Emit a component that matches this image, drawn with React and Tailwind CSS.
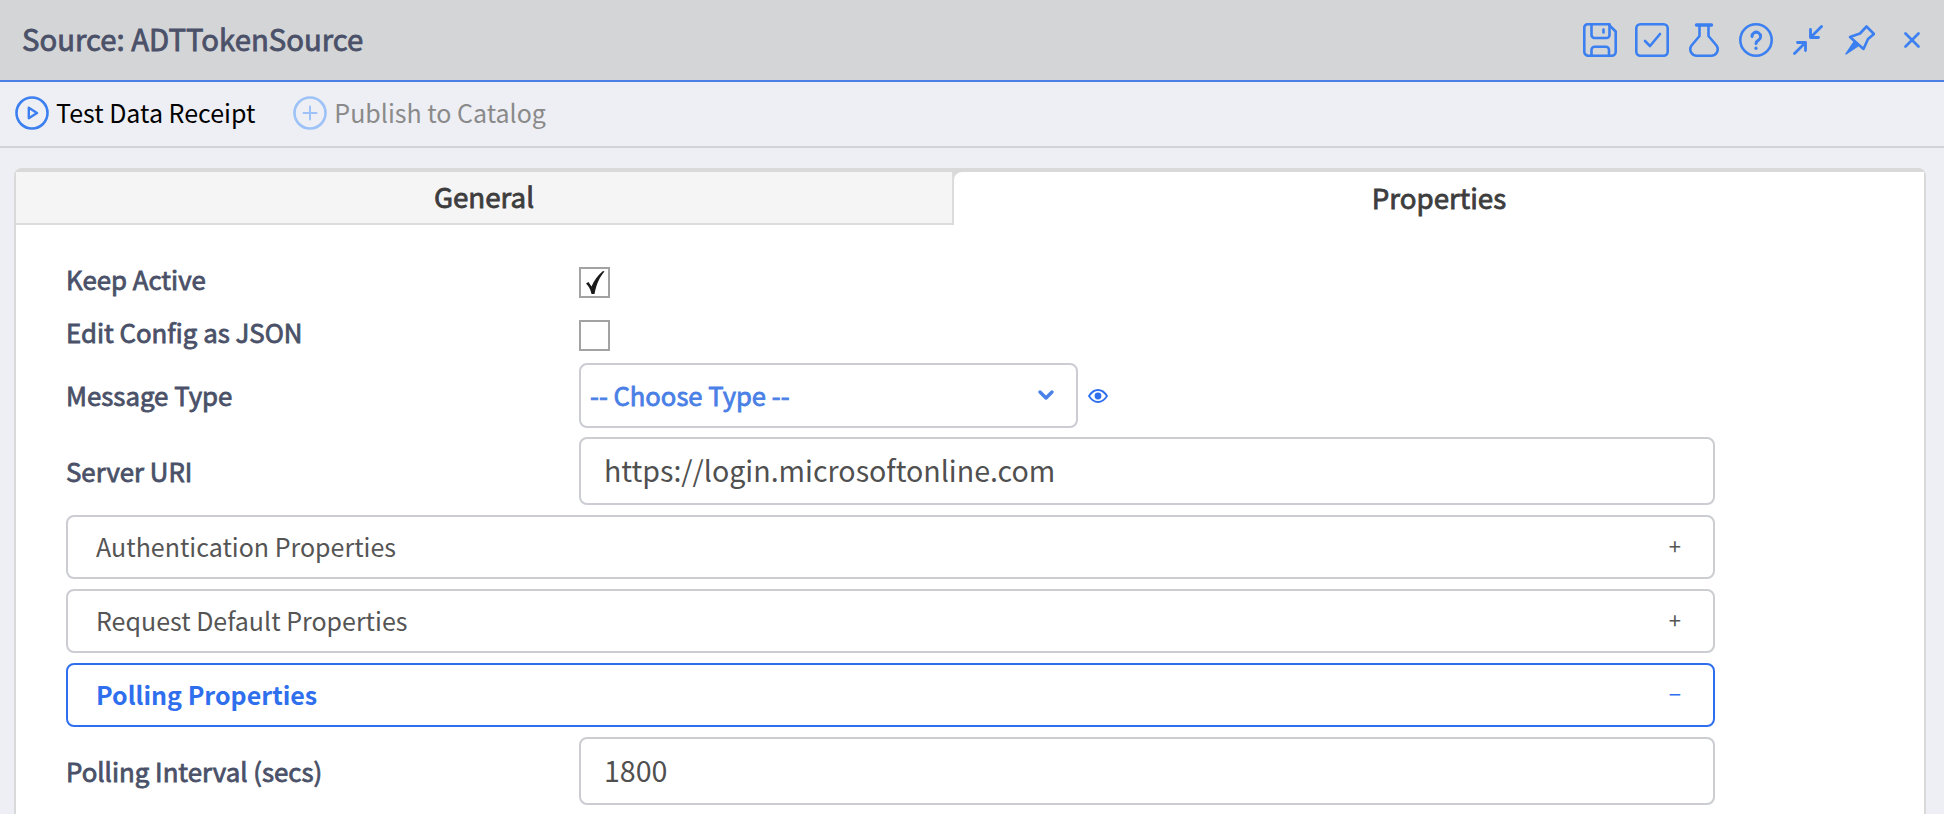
import React from "react";

const FONT = "font-['Noto_Sans_CJK_SC','Noto_Sans',sans-serif]";
const SEMI = "font-normal [-webkit-text-stroke:0.8px_currentColor]";

const SaveIcon = () => (
  <svg width="34" height="34" viewBox="0 0 34 34" fill="none" stroke="#3b7ff0" strokeWidth="2.6" strokeLinecap="round" strokeLinejoin="round">
    <path d="M4.500 1.300h21l7.200 7.200v20.200a4 4 0 0 1-4 4H5.300a4 4 0 0 1-4-4V4.500a3.200 3.200 0 0 1 3.200-3.200z" />
    <path d="M8.500 1.300v10.700a3 3 0 0 0 3 3h12a3 3 0 0 0 3-3V1.300" />
    <path d="M20.500 6.500v3" />
    <path d="M8.500 32.700v-6a3 3 0 0 1 3-3h11.500a3 3 0 0 1 3 3v6" />
  </svg>
);

const CheckIcon = () => (
  <svg width="34" height="34" viewBox="0 0 34 34" fill="none" stroke="#3b7ff0" strokeWidth="2.6" strokeLinecap="round" strokeLinejoin="round">
    <rect x="1.300" y="1.300" width="31.400" height="31.400" rx="4" />
    <path d="M10 18l5 5 10-12" />
  </svg>
);

const FlaskIcon = () => (
  <svg width="32" height="34" viewBox="0 0 32 34" fill="none" stroke="#3b7ff0" strokeWidth="2.6" strokeLinecap="round" strokeLinejoin="round">
    <path d="M8.500 2h15" strokeWidth="3.400" />
    <path d="M11.500 3v10L3.500 22.500C0.500 27 3.500 32.700 9 32.700h14c5.500 0 8.500-5.700 5.500-10.200L20.500 13V3" />
  </svg>
);

const HelpIcon = () => (
  <svg width="34" height="34" viewBox="0 0 34 34" fill="none" stroke="#3b7ff0" strokeWidth="2.6" strokeLinecap="round" strokeLinejoin="round">
    <circle cx="17" cy="17" r="15.700" />
    <path d="M13 13.500a4.300 4.300 0 1 1 6.600 3.600c-1.700 1-2.600 1.700-2.600 3.400" strokeWidth="3" />
    <path d="M17 25v.3" strokeWidth="3.200" />
  </svg>
);

const ShrinkIcon = () => (
  <svg width="30" height="30" viewBox="0 0 30 30" fill="none" stroke="#3b7ff0" strokeWidth="2.800" strokeLinecap="round" strokeLinejoin="round">
    <path d="M1.500 28.500L12 18" />
    <path d="M4.500 17.500H12.500V25.500" />
    <path d="M28.500 1.500L18 12" />
    <path d="M17.500 4.500V12.500H25.500" />
  </svg>
);

const PinIcon = () => (
  <svg width="30" height="30" viewBox="0 0 30 30" fill="none" stroke="#3b7ff0" strokeWidth="2.600" strokeLinecap="round" strokeLinejoin="round">
    <path d="M21.500 1.500l7.500 7.500-6 5-4.500 10L5 12l10-3.500z" />
    <path d="M1 29l8-12 4 4z" fill="#3b7ff0" strokeWidth="1.400" />
  </svg>
);

const CloseIcon = () => (
  <svg width="16" height="16" viewBox="0 0 16 16" fill="none" stroke="#3b7ff0" strokeWidth="2.600" strokeLinecap="round">
    <path d="M1.500 1.500l13 13M14.500 1.500l-13 13" />
  </svg>
);

const PlayCircle = () => (
  <svg width="34" height="34" viewBox="0 0 34 34" fill="none" stroke="#3b7ff0" strokeWidth="2.600" strokeLinejoin="round">
    <circle cx="17" cy="17" r="15.500" />
    <path d="M13.800 11.800l8.200 5.200-8.200 5.200z" strokeWidth="2.400" />
  </svg>
);

const PlusCircle = () => (
  <svg width="34" height="34" viewBox="0 0 34 34" fill="none" stroke="#9cc2f7" strokeWidth="2.600" strokeLinecap="round">
    <circle cx="17" cy="17" r="15.500" />
    <path d="M17 10.500v13M10.500 17h13" strokeWidth="2" />
  </svg>
);

const Chevron = () => (
  <svg width="18" height="12" viewBox="0 0 18 12" fill="none" stroke="#4a80e8" strokeWidth="3.400" strokeLinecap="round" strokeLinejoin="round">
    <path d="M3 3l6 6 6-6" />
  </svg>
);

const Eye = () => (
  <svg width="20" height="14" viewBox="0 0 20 14" fill="none" stroke="#2f6fed" strokeWidth="1.800">
    <path d="M1 7c2.500-4 5.500-6 9-6s6.500 2 9 6c-2.500 4-5.500 6-9 6s-6.500-2-9-6z" />
    <circle cx="10" cy="7" r="2.500" fill="#2f6fed" />
  </svg>
);

const Accordion = ({ label, open }) => (
  <div
    className={`flex items-center justify-between h-[64px] mb-[10px] pl-[28px] pr-[32px] rounded-[8px] border-2 bg-white text-[25px] ${
      open
        ? "border-[#2f6fed] text-[#2f6fed] font-semibold"
        : "border-[#cbcdd3] text-[#555555]"
    }`}
  >
    <span>{label}</span>
    <span className="pb-[3px] text-[22px] font-normal">{open ? "−" : "+"}</span>
  </div>
);

const Row = ({ label, className, labelClass, children }) => (
  <div className={`flex items-center ${className}`}>
    <div className={`w-[513px] shrink-0 text-[25.8px] text-[#4a5168] ${SEMI} ${labelClass}`}>{label}</div>
    {children}
  </div>
);

const TextBox = ({ value }) => (
  <div className="flex items-center w-[1136px] h-[68px] pl-[23px] pb-[2px] rounded-[8px] border-2 border-[#cbcdd3] text-[28.6px] text-[#505050]">
    {value}
  </div>
);

const Box = ({ checked }) => (
  <div className="flex items-center justify-center w-[31px] h-[31px] border-2 border-[#a3a3a3] bg-white">
    {checked && (
      <svg width="22" height="27" viewBox="0 0 22 24" fill="#1a1a1a">
        <path d="M2 13l2.500-1.500 3 4.500c2.500-6 6-11 11.500-15.500l1.500.5c-4.500 5-8 12-10 22.500H7.500C6.500 18.500 4.500 15.500 2 13z" />
      </svg>
    )}
  </div>
);

export default function App() {
  return (
    <div className={`flex flex-col h-screen overflow-hidden bg-[#eeeff4] ${FONT}`}>
      {/* Title bar */}
      <div className="flex items-center justify-between h-[82px] shrink-0 pl-[22px] pr-[6px] bg-[#d4d5d7] border-b-2 border-[#4a7fe6]">
        <div className={`pb-[2px] text-[29.3px] text-[#4a5168] ${SEMI}`}>Source: ADTTokenSource</div>
        <div className="flex items-center [&>span]:flex [&>span]:w-[52px] [&>span]:justify-center">
          <span><SaveIcon /></span>
          <span><CheckIcon /></span>
          <span><FlaskIcon /></span>
          <span><HelpIcon /></span>
          <span><ShrinkIcon /></span>
          <span><PinIcon /></span>
          <span><CloseIcon /></span>
        </div>
      </div>

      {/* Toolbar */}
      <div className="flex items-center h-[66px] shrink-0 pl-[15px] pb-[3px] border-b-2 border-[#d1d4d6] text-[25px]">
        <PlayCircle />
        <span className="ml-[7px] text-black">Test Data Receipt</span>
        <span className="ml-[38px]"><PlusCircle /></span>
        <span className="ml-[7px] text-[#8a8a8a]">Publish to Catalog</span>
      </div>

      {/* Tabbed panel */}
      <div className="flex flex-col flex-1 mt-[20px] ml-[14px] mr-[18px] rounded-t-[8px] bg-white border-x-2 border-t-4 border-[#d9d9d9]">
        <div className={`flex h-[53px] shrink-0 bg-[#d9d9d9] text-[27.7px] text-[#3d3d3d] ${SEMI}`}>
          <div className="flex items-center justify-center w-[938px] pb-[1px] bg-[#f5f5f5] border-b-2 border-r-2 border-[#dcdcdc]">General</div>
          <div className="flex items-center justify-center flex-1 pb-[2px] bg-white rounded-tl-[8px]">Properties</div>
        </div>
        <div className="pl-[50px] pt-[34px] w-[1699px]">
          <Row label="Keep Active" labelClass="pb-[5px]" className="h-[46px] mb-[7px]"><Box checked /></Row>
          <Row label="Edit Config as JSON" labelClass="pb-[5px]" className="h-[46px] mb-[5px]"><Box /></Row>
          <Row label="Message Type" className="mb-[9px]">
            <div className={`flex items-center justify-between w-[499px] h-[65px] pl-[9px] pr-[21px] pb-[1px] rounded-[8px] border-2 border-[#cbcdd3] text-[25.6px] text-[#4a7fe6] ${SEMI}`}>
              <span>-- Choose Type --</span>
              <Chevron />
            </div>
            <span className="ml-[10px]"><Eye /></span>
          </Row>
          <Row label="Server URI" className="mb-[10px]"><TextBox value="https://login.microsoftonline.com" /></Row>
          <Accordion label="Authentication Properties" />
          <Accordion label="Request Default Properties" />
          <Accordion label="Polling Properties" open />
          <Row label="Polling Interval (secs)"><TextBox value="1800" /></Row>
        </div>
      </div>
    </div>
  );
}
